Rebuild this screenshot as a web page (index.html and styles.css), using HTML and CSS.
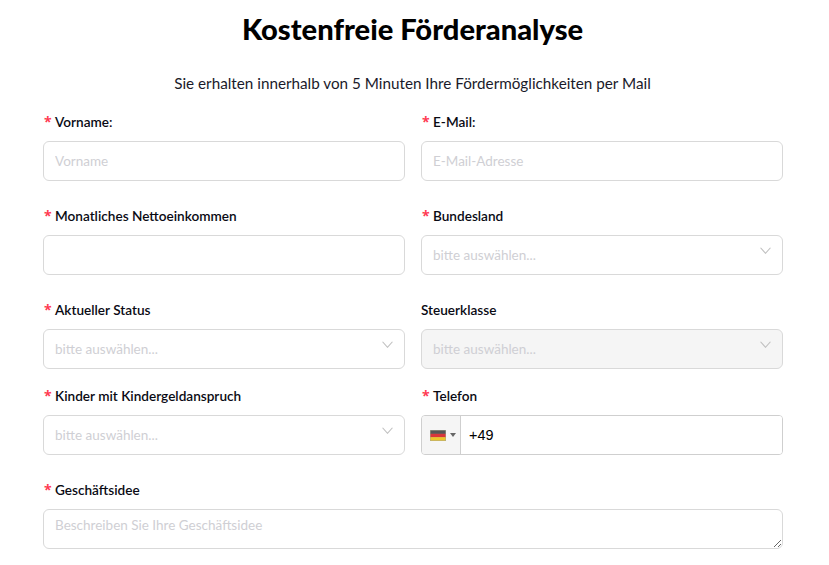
FILE: index.html
```html
<!DOCTYPE html>
<html lang="de">
<head>
<meta charset="utf-8">
<title>Kostenfreie Förderanalyse</title>
<link rel="stylesheet" href="styles.css">
</head>
<body>
<main class="page">
  <h1 class="title">Kostenfreie Förderanalyse</h1>
  <p class="subtitle">Sie erhalten innerhalb von 5 Minuten Ihre Fördermöglichkeiten per Mail</p>
  <form class="form">
    <div class="field">
      <label class="label"><span class="req">*</span>Vorname:</label>
      <input class="control" type="text" placeholder="Vorname">
    </div>
    <div class="field">
      <label class="label"><span class="req">*</span>E-Mail:</label>
      <input class="control" type="text" placeholder="E-Mail-Adresse">
    </div>
    <div class="field">
      <label class="label"><span class="req">*</span>Monatliches Nettoeinkommen</label>
      <input class="control" type="text">
    </div>
    <div class="field">
      <label class="label"><span class="req">*</span>Bundesland</label>
      <div class="control select"><span>bitte auswählen...</span>
        <svg class="chevron" viewBox="0 0 10 6"><path d="M0.5 0.5 5 5.5 9.5 0.5"/></svg></div>
    </div>
    <div class="field tight">
      <label class="label"><span class="req">*</span>Aktueller Status</label>
      <div class="control select"><span>bitte auswählen...</span>
        <svg class="chevron" viewBox="0 0 10 6"><path d="M0.5 0.5 5 5.5 9.5 0.5"/></svg></div>
    </div>
    <div class="field tight">
      <label class="label">Steuerklasse</label>
      <div class="control select disabled"><span>bitte auswählen...</span>
        <svg class="chevron" viewBox="0 0 10 6"><path d="M0.5 0.5 5 5.5 9.5 0.5"/></svg></div>
    </div>
    <div class="field">
      <label class="label"><span class="req">*</span>Kinder mit Kindergeldanspruch</label>
      <div class="control select"><span>bitte auswählen...</span>
        <svg class="chevron" viewBox="0 0 10 6"><path d="M0.5 0.5 5 5.5 9.5 0.5"/></svg></div>
    </div>
    <div class="field">
      <label class="label"><span class="req">*</span>Telefon</label>
      <div class="phone">
        <div class="dial">
          <svg class="flag" viewBox="0 0 16 11"><rect width="16" height="11" fill="#a8a890"/><rect x="0.5" y="0.5" width="15" height="3.4" fill="#555"/><rect x="0.5" y="3.8" width="15" height="3.4" fill="#d8363a"/><rect x="0.5" y="7.2" width="15" height="3.3" fill="#eec42a"/></svg>
          <span class="caret"></span>
        </div>
        <input class="phone-input" type="text" value="+49">
      </div>
    </div>
    <div class="field wide">
      <label class="label"><span class="req">*</span>Geschäftsidee</label>
      <textarea class="control area" placeholder="Beschreiben Sie Ihre Geschäftsidee"></textarea>
    </div>
  </form>
</main>
</body>
</html>
```
FILE: styles.css
```css
* { box-sizing: border-box; }
html, body { margin: 0; height: 100%; overflow: hidden; background: #fff; }
body { font-family: "Lato", "Noto Sans", sans-serif; color: #000; }
.page { padding: 0 46px 0 43px; }
.title { margin: 0 1px 0 0; padding-top: 10px; font-size: 29.1px; line-height: 38px; font-weight: 900; text-align: center; }
.subtitle { margin: 0 1px 0 0; padding-top: 25px; font-size: 15.25px; line-height: 20px; text-align: center; color: #1a1a2a; }
.form { display: grid; grid-template-columns: 362px 362px; column-gap: 16px; padding-top: 19px; }
.field { display: flex; flex-direction: column; margin-bottom: 25px; }
.field.tight { margin-bottom: 17px; }
.field.wide { grid-column: 1 / 3; }
.label { height: 20px; margin-bottom: 9px; font-size: 13.6px; line-height: 20px; font-weight: 600; color: #0a0a14; }
.req { display: inline-block; width: 12px; padding-left: 1px; color: #ff3b52; font-family: "Open Sans", sans-serif; font-size: 14px; font-weight: 700; }
.control { width: 100%; height: 40px; padding: 0 11px; border: 1px solid #d9d9d9; border-radius: 6px; background: #fff; font-family: inherit; font-size: 13.5px; color: #000; outline: none; }
.control::placeholder, .select span { color: #cfcfd4; opacity: 1; }
.select { position: relative; display: flex; align-items: center; }
.select.disabled { background: #f5f5f5; }
.chevron { position: absolute; right: 11px; top: 11px; width: 11px; height: 7px; fill: none; stroke: #bfbfbf; stroke-width: 1; }
.area { display: block; padding-top: 5px; line-height: 20px; resize: vertical; }
.phone { display: flex; height: 40px; border: 1px solid #cfcfcf; border-radius: 4px; overflow: hidden; }
.dial { display: flex; align-items: center; gap: 4px; width: 39px; padding-left: 8px; background: #f5f5f5; border-right: 1px solid #cfcfcf; }
.flag { width: 16px; height: 11px; display: block; }
.caret { width: 0; height: 0; border-left: 3px solid transparent; border-right: 3px solid transparent; border-top: 4px solid #666; }
.phone-input { flex: 1; min-width: 0; padding: 0 8px; border: 0; outline: none; font-family: "Liberation Sans", sans-serif; font-size: 14.4px; color: #000; }
```
